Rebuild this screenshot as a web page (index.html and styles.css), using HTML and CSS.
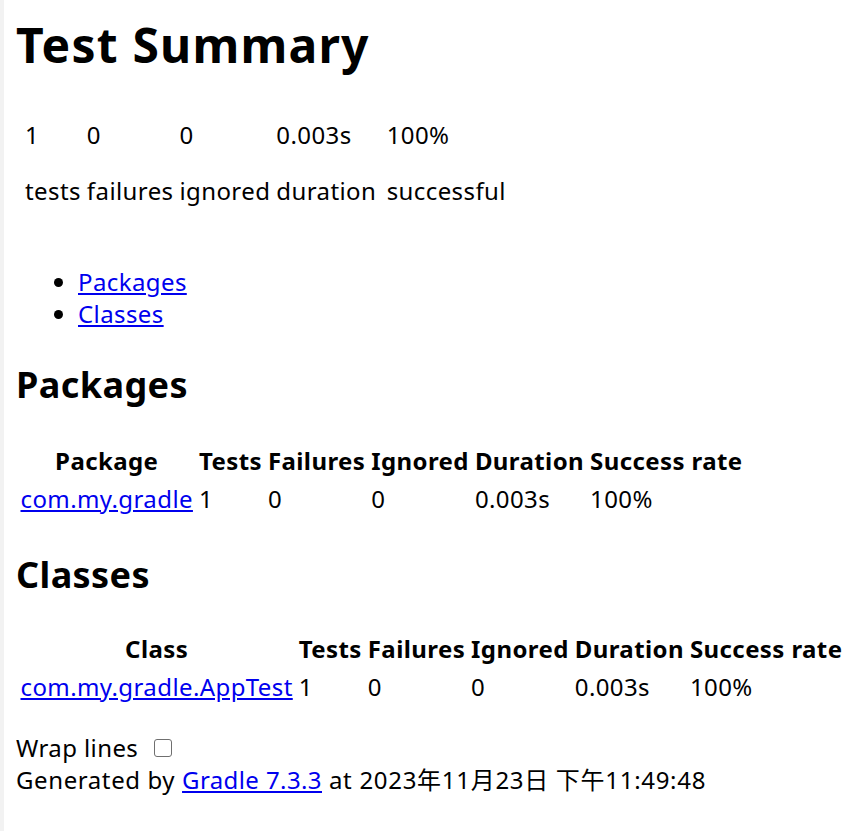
FILE: index.html
```html
<!DOCTYPE html>
<html lang="en">
<head>
<meta charset="utf-8">
<title>Test results - Test Summary</title>
<link rel="stylesheet" href="styles.css">
</head>
<body>
<h1 class="page-title">Test Summary</h1>
<div class="summary">
  <table class="grid">
    <tr>
      <td>
        <table class="grid">
          <tr>
            <td><div class="counter">1</div><p class="label">tests</p></td>
            <td><div class="counter">0</div><p class="label">failures</p></td>
            <td><div class="counter">0</div><p class="label">ignored</p></td>
            <td><div class="counter">0.003s</div><p class="label">duration</p></td>
          </tr>
        </table>
      </td>
      <td><div class="counter">100%</div><p class="label">successful</p></td>
    </tr>
  </table>
</div>
<div class="tabs">
  <ul class="tab-links">
    <li><a href="#tab0">Packages</a></li>
    <li><a href="#tab1">Classes</a></li>
  </ul>
  <div class="tab">
    <h2 class="section-title">Packages</h2>
    <table class="grid report">
      <thead>
        <tr><th>Package</th><th>Tests</th><th>Failures</th><th>Ignored</th><th>Duration</th><th>Success rate</th></tr>
      </thead>
      <tbody>
        <tr><td><a href="#">com.my.gradle</a></td><td>1</td><td>0</td><td>0</td><td>0.003s</td><td>100%</td></tr>
      </tbody>
    </table>
  </div>
  <div class="tab tab-classes">
    <h2 class="section-title">Classes</h2>
    <table class="grid report">
      <thead>
        <tr><th>Class</th><th>Tests</th><th>Failures</th><th>Ignored</th><th>Duration</th><th>Success rate</th></tr>
      </thead>
      <tbody>
        <tr><td><a href="#">com.my.gradle.AppTest</a></td><td>1</td><td>0</td><td>0</td><td>0.003s</td><td>100%</td></tr>
      </tbody>
    </table>
  </div>
</div>
<div class="footer">
  <div class="wrap-row"><label class="wrap-label" for="wrap">Wrap lines</label><input class="wrap-box" id="wrap" type="checkbox"></div>
  <div class="generated"><span class="gen-by">Generated by </span><a class="gen-link" href="#">Gradle 7.3.3</a><span class="gen-date"> at 2023年11月23日 下午11:49:48</span></div>
</div>
</body>
</html>
```
FILE: styles.css
```css
html {
  border-left: 4px solid #f2f2f2;
  min-height: 100%;
  background: #fff;
}
body {
  margin: 13px 12px 12px 12px;
  font-family: "Noto Sans", "Noto Sans CJK SC", sans-serif;
  font-size: 24px;
  line-height: 32px;
  letter-spacing: 0.4px;
  color: #000;
}
a { color: #0000ee; }
.page-title {
  font-size: 48px;
  font-weight: bold;
  margin: 0 0 34px 0;
  line-height: 63px;
  letter-spacing: 1.2px;
}
.grid {
  border-collapse: separate;
  border-spacing: 3px;
}
.grid td, .grid th {
  padding: 1.5px;
}
.grid th { font-weight: bold; text-align: center; }
.grid td { text-align: left; }
.label { margin: 24px 0; }
.tab-links {
  margin: 26px 0 24px 0;
  padding-left: 62px;
}
.section-title {
  font-size: 36px;
  font-weight: bold;
  margin: 31px 0 32px 0;
  line-height: 47px;
  letter-spacing: 0.4px;
}
.tab-classes { padding-top: 1px; }
.tab-classes .section-title { margin-bottom: 30px; }
.footer { margin-top: 25px; }
.wrap-row { display: flex; align-items: center; }
.wrap-box {
  appearance: none;
  -webkit-appearance: none;
  width: 18px;
  height: 18px;
  border: 1.5px solid #6f6f6f;
  border-radius: 3px;
  margin: 0 0 0 16px;
  background: #fff;
}
.gen-by { letter-spacing: 0.6px; }
.gen-date { letter-spacing: 0.7px; }
```
